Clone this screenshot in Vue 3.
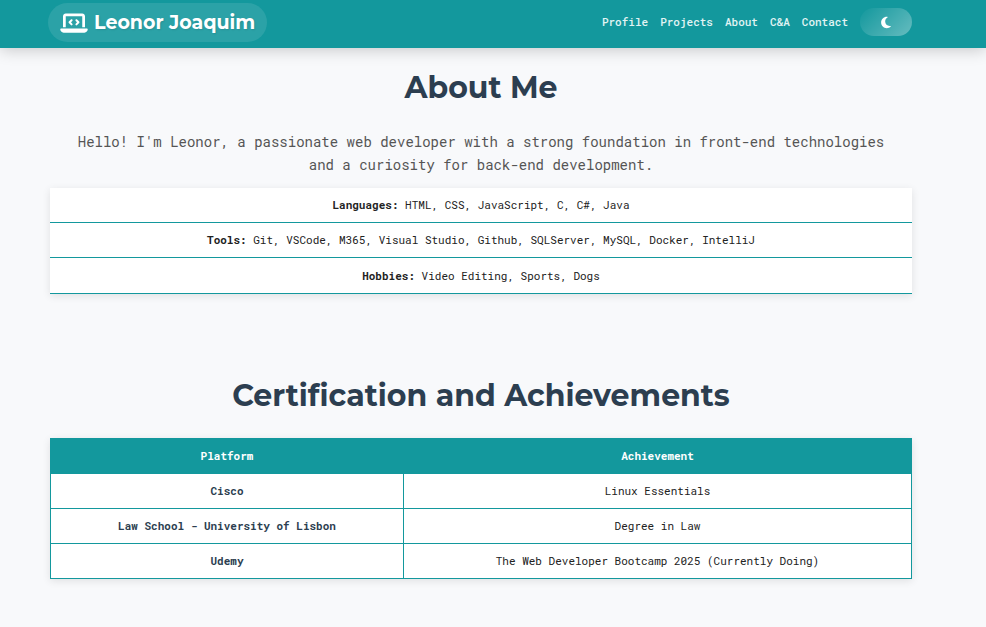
<script setup>
import { ref } from 'vue'

const links = [
  { label: 'Profile', href: '#profile' },
  { label: 'Projects', href: '#projects' },
  { label: 'About', href: '#about' },
  { label: 'C&A', href: '#certifications' },
  { label: 'Contact', href: '#contact' },
]

const facts = [
  { title: 'Languages:', text: 'HTML, CSS, JavaScript, C, C#, Java' },
  { title: 'Tools:', text: 'Git, VSCode, M365, Visual Studio, Github, SQLServer, MySQL, Docker, IntelliJ' },
  { title: 'Hobbies:', text: 'Video Editing, Sports, Dogs' },
]

const achievements = [
  { platform: 'Cisco', name: 'Linux Essentials' },
  { platform: 'Law School - University of Lisbon', name: 'Degree in Law' },
  { platform: 'Udemy', name: 'The Web Developer Bootcamp 2025 (Currently Doing)' },
]

const dark = ref(false)
</script>

<template>
  <div class="page">
    <header class="bar">
      <a class="brand" href="#profile">
        <svg class="brand-icon" viewBox="0 0 640 512" aria-hidden="true">
          <path d="M64 96c0-35.300 28.700-64 64-64H512c35.300 0 64 28.700 64 64V352H512V96H128V352H64V96zM0 403.200C0 392.600 8.600 384 19.200 384H620.800c10.600 0 19.200 8.600 19.200 19.200c0 42.400-34.400 76.800-76.800 76.800H76.800C34.400 480 0 445.600 0 403.200zM281 209l-31 31 31 31c9.400 9.400 9.400 24.600 0 33.900s-24.600 9.400-33.900 0l-48-48c-9.400-9.400-9.400-24.600 0-33.900l48-48c9.400-9.400 24.600-9.400 33.900 0s9.400 24.600 0 34zM393 175l48 48c9.400 9.400 9.400 24.600 0 33.900l-48 48c-9.400 9.400-24.600 9.400-33.900 0s-9.400-24.600 0-33.900l31-31-31-31c-9.400-9.400-9.400-24.600 0-33.900s24.600-9.400 33.900 0z" />
        </svg>
        <span>Leonor Joaquim</span>
      </a>
      <nav class="nav">
        <a v-for="link in links" :key="link.label" :href="link.href">{{ link.label }}</a>
        <button class="toggle" type="button" aria-label="Toggle dark mode" :aria-pressed="dark" @click="dark = !dark">
          <svg viewBox="0 0 384 512" aria-hidden="true">
            <path d="M223.500 32C100 32 0 132.300 0 256S100 480 223.500 480c60.600 0 115.500-24.200 155.800-63.400c5-4.900 6.300-12.500 3.100-18.700s-10.100-9.700-17-8.500c-9.800 1.700-19.800 2.600-30.100 2.600c-96.900 0-175.500-78.800-175.500-176c0-65.800 36-123.100 89.300-153.300c6.100-3.500 9.200-10.500 7.700-17.300s-7.300-11.900-14.300-12.500c-6.300-.5-12.600-.8-19-.8z" />
          </svg>
        </button>
      </nav>
    </header>

    <main class="content">
      <section id="about">
        <h1>About Me</h1>
        <p class="intro">
          Hello! I'm Leonor, a passionate web developer with a strong foundation in front-end technologies
          and a curiosity for back-end development.
        </p>
        <ul class="facts">
          <li v-for="fact in facts" :key="fact.title"><strong>{{ fact.title }}</strong> {{ fact.text }}</li>
        </ul>
      </section>

      <section id="certifications">
        <h1>Certification and Achievements</h1>
        <table class="awards">
          <thead>
            <tr>
              <th class="platform" scope="col">Platform</th>
              <th scope="col">Achievement</th>
            </tr>
          </thead>
          <tbody>
            <tr v-for="item in achievements" :key="item.platform">
              <th scope="row">{{ item.platform }}</th>
              <td>{{ item.name }}</td>
            </tr>
          </tbody>
        </table>
      </section>
    </main>
  </div>
</template>

<style>
body {
  background: #f8f9fb;
}
</style>

<style scoped>
.page {
  color: #222;
  font: 11px/17px "Roboto Mono", "DejaVu Sans Mono", monospace;
}

.bar {
  display: flex;
  align-items: center;
  justify-content: space-between;
  padding: 3px 74px 6px 48px;
  background: #13989d;
  box-shadow: 0 2px 15px rgba(0, 0, 0, 0.2);
}

.brand {
  display: flex;
  align-items: center;
  gap: 6px;
  padding: 8px 12px;
  border-radius: 20px;
  background: rgba(255, 255, 255, 0.1);
  color: #fff;
  font: 700 19px/23px Montserrat, "Open Sans", sans-serif;
  text-decoration: none;
  text-shadow: 1px 1px 2px rgba(0, 0, 0, 0.1);
}

.brand-icon {
  width: 28px;
  height: 22px;
  fill: currentColor;
}

.nav {
  display: flex;
  align-items: center;
  gap: 12px;
  padding-bottom: 1px;
}

.nav a {
  color: #e2f4f4;
  font-weight: 500;
  line-height: 18px;
  text-decoration: none;
}

.toggle {
  display: flex;
  align-items: center;
  justify-content: center;
  width: 52px;
  height: 28px;
  padding: 0;
  border: 0;
  border-radius: 14px;
  background: linear-gradient(135deg, rgba(255, 255, 255, 0), rgba(255, 255, 255, 0.35));
  color: #fff;
}

.toggle svg {
  width: 10px;
  height: 13px;
  fill: currentColor;
}

.content {
  display: grid;
  gap: 82px;
  padding: 20px 74px 48px 50px;
  text-align: center;
}

h1 {
  margin: 0;
  color: #2c3e50;
  font: 700 30px/40px Montserrat, Inter, sans-serif;
}

.intro {
  margin: 22px 0 12px;
  padding: 0 14px;
  color: #555;
  font-size: 14px;
  line-height: 23px;
}

.facts {
  margin: 0;
  padding: 0;
  list-style: none;
  background: #fff;
  box-shadow: 0 2px 8px rgba(0, 0, 0, 0.1);
}

.facts li {
  padding: 8px 12px 9px;
  border-bottom: 1px solid #13989d;
}

.facts li:last-child {
  padding-top: 9px;
}

.awards {
  width: 100%;
  margin-top: 22px;
  border-collapse: collapse;
  background: #fff;
  box-shadow: 0 2px 8px rgba(0, 0, 0, 0.1);
}

.awards th,
.awards td {
  padding: 8px 12px 9px;
  border: 1px solid #13989d;
}

.awards thead th {
  background: #13989d;
  color: #fff;
}

.awards tbody th {
  color: #2c3e50;
}

.awards .platform {
  width: 41%;
  box-sizing: border-box;
}
</style>
